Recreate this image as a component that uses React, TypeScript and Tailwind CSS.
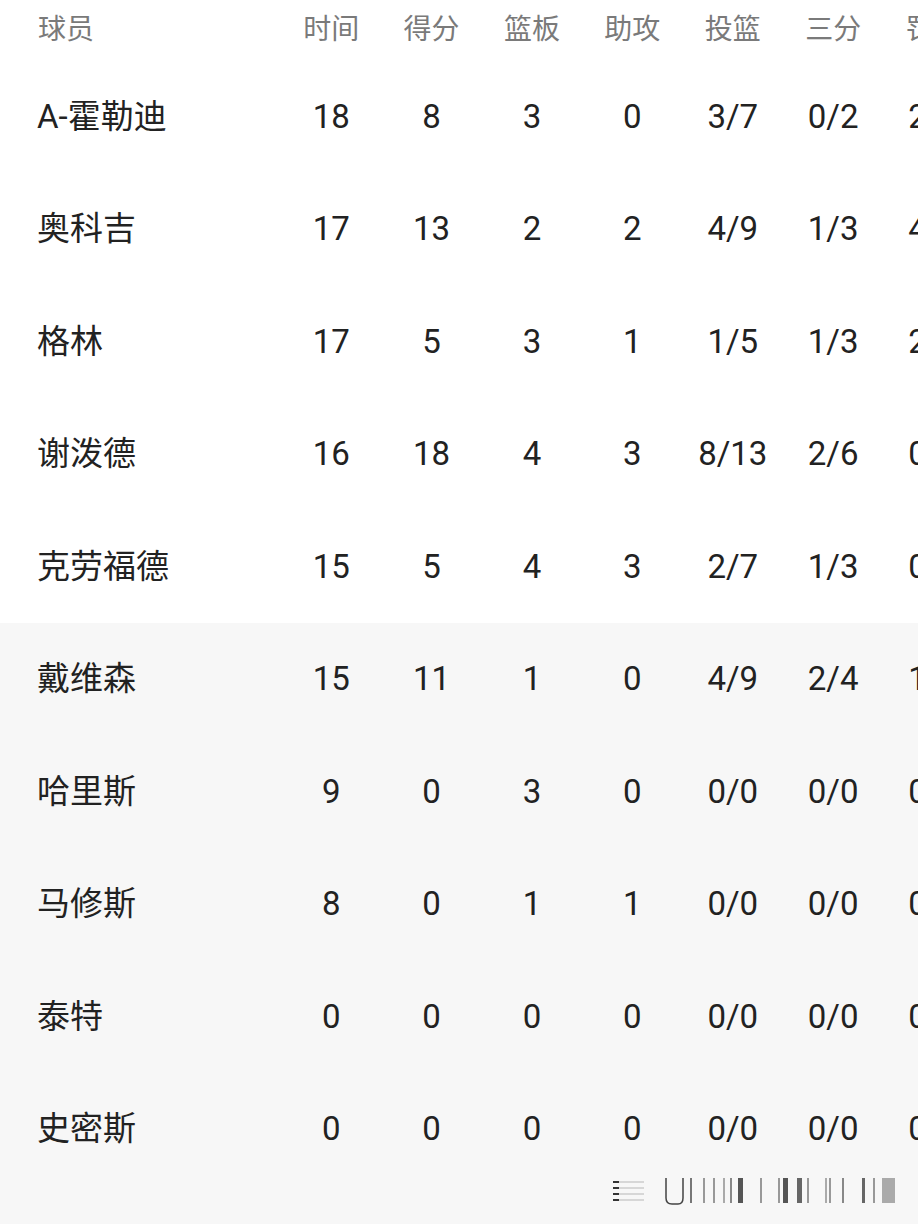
const headers = ['时间', '得分', '篮板', '助攻', '投篮', '三分', '罚球']

const rows: [string, string[]][] = [
  ['A-霍勒迪', ['18', '8', '3', '0', '3/7', '0/2', '2/2']],
  ['奥科吉', ['17', '13', '2', '2', '4/9', '1/3', '4/4']],
  ['格林', ['17', '5', '3', '1', '1/5', '1/3', '2/2']],
  ['谢泼德', ['16', '18', '4', '3', '8/13', '2/6', '0/0']],
  ['克劳福德', ['15', '5', '4', '3', '2/7', '1/3', '0/0']],
  ['戴维森', ['15', '11', '1', '0', '4/9', '2/4', '1/2']],
  ['哈里斯', ['9', '0', '3', '0', '0/0', '0/0', '0/0']],
  ['马修斯', ['8', '0', '1', '1', '0/0', '0/0', '0/0']],
  ['泰特', ['0', '0', '0', '0', '0/0', '0/0', '0/0']],
  ['史密斯', ['0', '0', '0', '0', '0/0', '0/0', '0/0']],
]

const font = { fontFamily: 'Roboto, "Noto Sans CJK SC", sans-serif' }

// blurry watermark in the bottom-right corner
function Watermark() {
  const bars: [number, number, string][] = [
    [90, 2, '#777'], [103, 2, '#999'], [113, 2, '#999'], [123, 2, '#aaa'], [130, 2, '#888'],
    [138, 5, '#555'], [160, 2, '#999'], [178, 2, '#999'], [183, 5, '#555'], [197, 5, '#666'],
    [207, 2, '#999'], [225, 2, '#aaa'], [229, 2, '#999'], [242, 2, '#888'], [262, 3, '#666'],
    [273, 2, '#999'],
  ]
  return (
    <svg width="310" height="40" viewBox="0 0 310 40" className="absolute left-[600px] top-[1170px] blur-[0.6px]">
      {[12, 18, 24, 30].map(y => (
        <g key={y}>
          <line x1="13" x2="44" y1={y} y2={y} stroke="#ccc" strokeWidth="1.5" />
          <line x1="13" x2="19" y1={y} y2={y} stroke="#333" strokeWidth="2" />
        </g>
      ))}
      <path d="M66 8 V28 Q66 34 72 34 H78 Q83 34 83 28 V8" fill="none" stroke="#444" strokeWidth="1.5" />
      {bars.map(([x, w, c], i) => (
        <rect key={i} x={x} y="8" width={w} height="25" fill={c} />
      ))}
      <rect x="282" y="8" width="13" height="25" fill="#aaa" />
    </svg>
  )
}

export default function App() {
  return (
    <div className="relative w-[918px] h-[1224px] overflow-hidden bg-white" style={font}>
      <div className="flex h-[60px] items-start pt-[9px] text-[28px] text-[#7a7a7a]">
        <div className="w-[281px] shrink-0 pl-[38px]">球员</div>
        {headers.map(h => (
          <div key={h} className="w-[100.4px] shrink-0 text-center whitespace-nowrap">{h}</div>
        ))}
      </div>
      {rows.map(([name, vals], i) => (
        <div
          key={name}
          className={`flex h-[112.5px] items-center text-[33px] text-[#222] ${i >= 5 ? 'bg-[#f7f7f7]' : 'bg-white'}`}
        >
          <div className="w-[281px] shrink-0 pl-[37px] whitespace-nowrap">{name}</div>
          {vals.map((v, j) => (
            <div key={j} className="w-[100.4px] shrink-0 text-center whitespace-nowrap">{v}</div>
          ))}
        </div>
      ))}
      <div className="h-[40px] bg-[#f7f7f7]" />
      <Watermark />
    </div>
  )
}
